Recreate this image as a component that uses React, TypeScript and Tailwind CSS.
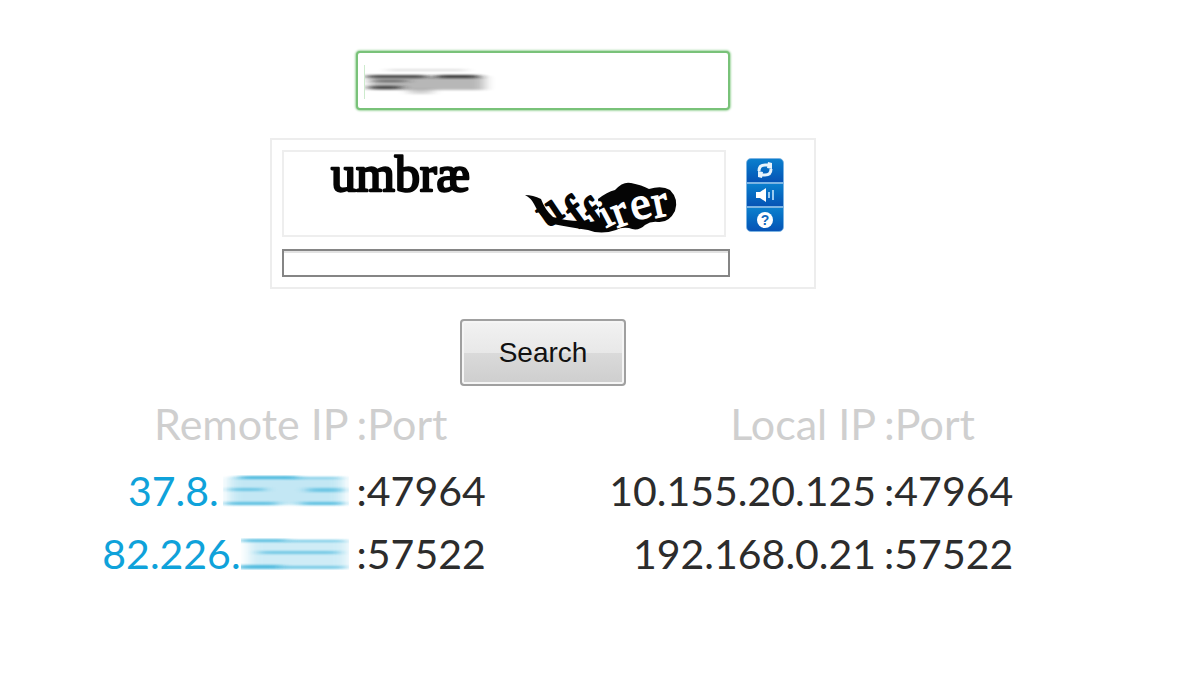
import React from "react";

type Streak = { x: number; y: number; w: number; h: number; o: number };

type SmudgeProps = {
  id: string;
  width: number;
  height: number;
  color: string;
  streaks: Streak[];
  className?: string;
};

function Smudge({ id, width, height, color, streaks, className }: SmudgeProps) {
  return (
    <svg
      width={width}
      height={height}
      viewBox={`0 0 ${width} ${height}`}
      className={className}
      aria-hidden="true"
    >
      <defs>
        <filter
          id={id}
          filterUnits="userSpaceOnUse"
          x="-20"
          y="-10"
          width={width + 40}
          height={height + 20}
        >
          <feGaussianBlur stdDeviation="6 1" />
        </filter>
      </defs>
      {streaks.map((s, i) => (
        <rect
          key={i}
          x={s.x}
          y={s.y}
          width={s.w}
          height={s.h}
          fill={color}
          opacity={s.o}
          filter={`url(#${id})`}
        />
      ))}
    </svg>
  );
}

const nameStreaks: Streak[] = [
  { x: 6, y: 11, w: 114, h: 14, o: 0.32 },
  { x: 2, y: 10, w: 60, h: 3, o: 0.8 },
  { x: 72, y: 10, w: 42, h: 3, o: 0.9 },
  { x: 8, y: 15, w: 34, h: 2, o: 0.6 },
  { x: 4, y: 21, w: 32, h: 3, o: 0.8 },
  { x: 44, y: 24, w: 24, h: 5, o: 0.2 },
  { x: 22, y: 4, w: 80, h: 2, o: 0.15 },
];

const firstStreaks: Streak[] = [
  { x: 6, y: 2, w: 114, h: 28, o: 0.25 },
  { x: 16, y: 1, w: 58, h: 3, o: 0.75 },
  { x: 68, y: 2, w: 50, h: 2, o: 0.4 },
  { x: 6, y: 13, w: 36, h: 3, o: 0.5 },
  { x: 84, y: 13, w: 36, h: 4, o: 0.5 },
  { x: 2, y: 27, w: 52, h: 3, o: 0.6 },
  { x: 78, y: 27, w: 42, h: 3, o: 0.6 },
];

const secondStreaks: Streak[] = [
  { x: 8, y: 2, w: 98, h: 28, o: 0.2 },
  { x: 0, y: 1, w: 46, h: 3, o: 0.65 },
  { x: 46, y: 2, w: 58, h: 2, o: 0.5 },
  { x: 18, y: 13, w: 80, h: 3, o: 0.5 },
  { x: -4, y: 27, w: 44, h: 4, o: 0.7 },
  { x: 38, y: 28, w: 66, h: 3, o: 0.5 },
];

function Challenge() {
  return (
    <svg
      width="440"
      height="83"
      viewBox="284 153 440 83"
      className="block overflow-visible"
      role="img"
      aria-label="umbræ uffirer"
    >
      <text
        x="331"
        y="192"
        fontFamily="'Liberation Serif', serif"
        fontSize="50"
        stroke="#050505"
        strokeWidth="2.4"
        strokeLinejoin="round"
        fill="#050505"
      >
        umbræ
      </text>
      <path
        d="M525 196 Q533 196 541 200 Q545 211 553 218 Q566 222 580 222 Q594 225 600 219 L598 200 Q607 193 615 191 Q623 182 631 184 Q642 186 649 190 Q662 186 670 191 Q679 200 675 212 Q669 224 658 223 Q651 222 645 226 Q638 233 629 229 Q621 228 616 231 Q601 236 588 231 Q568 228 553 225 Q540 219 534 205 Q531 199 525 196 Z"
        fill="#050505"
      />
      <g
        fontFamily="'Liberation Serif', serif"
        fontSize="46"
        fill="#050505"
        stroke="#050505"
        strokeWidth="2.4"
        strokeLinejoin="round"
      >
        <text x="547" y="229" transform="rotate(-34 547 229)" fontSize="44">
          u
        </text>
        <text x="578" y="230" transform="rotate(-36 578 230)">
          f
        </text>
        <text x="597" y="232" transform="rotate(-36 597 232)">
          f
        </text>
      </g>
      <g
        fontFamily="'Liberation Serif', serif"
        fontSize="46"
        fill="#fff"
        stroke="#fff"
        strokeWidth="1.4"
      >
        <text x="606" y="229" transform="rotate(-28 606 229)" fontSize="40">
          i
        </text>
        <text x="617" y="229" transform="rotate(-20 617 229)">
          r
        </text>
        <text x="634" y="222" transform="rotate(-16 634 222)">
          e
        </text>
        <text x="655" y="219" transform="rotate(-12 655 219)">
          r
        </text>
      </g>
    </svg>
  );
}

const toolClass =
  "flex w-full flex-1 items-center justify-center bg-linear-to-b from-[#0c7fcd] to-[#0753b5]";

export default function App() {
  return (
    <main className="flex flex-col items-center bg-white pt-[51px] pr-[114px] pb-24 font-['Lato',sans-serif]">
      <form
        className="flex flex-col items-center"
        onSubmit={(e) => e.preventDefault()}
      >
        <div className="relative">
          <input
            type="text"
            aria-label="Name"
            className="block h-[59px] w-[374px] rounded-sm border-2 border-[#79c279] bg-white px-2 text-2xl shadow-[0_0_2px_1px_#a5d8a5] outline-none"
          />
          <Smudge
            id="smudge-name"
            width={134}
            height={34}
            color="#222"
            streaks={nameStreaks}
            className="pointer-events-none absolute top-[14px] left-2 overflow-hidden border-l border-[#cdebcd]"
          />
        </div>

        <div className="mt-7 border-2 border-[#ededed] py-2.5 pr-[30px] pl-2.5">
          <div className="flex items-start">
            <div className="border-2 border-[#eeeeee]">
              <Challenge />
            </div>
            <div className="mt-2 ml-5 flex h-[74px] w-[38px] flex-col gap-0.5 overflow-hidden rounded-[5px] border border-[#7db4e3] bg-[#7db4e3]">
              <button type="button" aria-label="New challenge" className={toolClass}>
                <svg width="18" height="18" viewBox="0 0 18 18" aria-hidden="true">
                  <path
                    d="M3 10 Q3 4 9 4 H13 M15 8 Q15 14 9 14 H5"
                    fill="none"
                    stroke="#e8f4fc"
                    strokeWidth="3"
                  />
                  <path d="M12 1 L16 2 V8 L11 7 Z M6 17 L2 16 V10 L7 11 Z" fill="#e8f4fc" />
                </svg>
              </button>
              <button type="button" aria-label="Audio challenge" className={toolClass}>
                <svg width="22" height="16" viewBox="0 0 22 16" aria-hidden="true">
                  <path d="M2 5 H6 L12 1 V15 L6 11 H2 Z" fill="#fff" />
                  <path
                    d="M15 5 V11 M19 3 V13"
                    fill="none"
                    stroke="#9ccbf0"
                    strokeWidth="2"
                  />
                </svg>
              </button>
              <button type="button" aria-label="Help" className={toolClass}>
                <span className="flex size-4 items-center justify-center rounded-full bg-white font-['Liberation_Sans',sans-serif] text-sm leading-4 font-bold text-[#1268bd]">
                  ?
                </span>
              </button>
            </div>
          </div>
          <input
            type="text"
            aria-label="Type the two words"
            className="mt-3 block h-7 w-[448px] border-2 border-[#858585] bg-white px-1 shadow-[inset_0_2px_0_#e2e2e2] outline-none"
          />
        </div>

        <button
          type="submit"
          className="mt-[30px] h-[67px] w-[166px] rounded-[4px] border-2 border-[#a0a0a0] bg-[linear-gradient(#f2f2f2,#e8e8e8_50%,#dadada_50%,#cecece)] font-['Liberation_Sans',sans-serif] text-[28px] text-[#111] shadow-[inset_0_0_0_2px_#f5f5f5]"
        >
          Search
        </button>
      </form>

      <table className="mt-1.5 w-full max-w-[942px] table-fixed text-[41px] leading-[63px] whitespace-nowrap text-[#2c2c2c]">
        <colgroup>
          <col className="w-[30%]" />
          <col className="w-[14%]" />
          <col className="w-[42%]" />
          <col className="w-[14%]" />
        </colgroup>
        <thead>
          <tr className="text-[43px] text-[#cfcfcf]">
            <th className="pr-1.5 pb-1 text-right font-normal">Remote IP</th>
            <th className="pb-1 pl-0.5 text-left font-normal">:Port</th>
            <th className="pr-1.5 pb-1 text-right font-normal">Local IP</th>
            <th className="pb-1 pl-0.5 text-left font-normal">:Port</th>
          </tr>
        </thead>
        <tbody>
          <tr>
            <td className="pr-1.5 text-[#0fa2da]">
              <div className="flex items-center justify-end gap-1">
                37.8.
                <Smudge
                  id="smudge-first"
                  width={126}
                  height={32}
                  color="#16a4d4"
                  streaks={firstStreaks}
                />
              </div>
            </td>
            <td className="pl-0.5">:47964</td>
            <td className="pr-1.5 text-right">10.155.20.125</td>
            <td className="pl-0.5">:47964</td>
          </tr>
          <tr>
            <td className="pr-1.5 text-[#0fa2da]">
              <div className="flex items-center justify-end">
                82.226.
                <Smudge
                  id="smudge-second"
                  width={108}
                  height={32}
                  color="#16a4d4"
                  streaks={secondStreaks}
                />
              </div>
            </td>
            <td className="pl-0.5">:57522</td>
            <td className="pr-1.5 text-right">192.168.0.21</td>
            <td className="pl-0.5">:57522</td>
          </tr>
        </tbody>
      </table>
    </main>
  );
}
